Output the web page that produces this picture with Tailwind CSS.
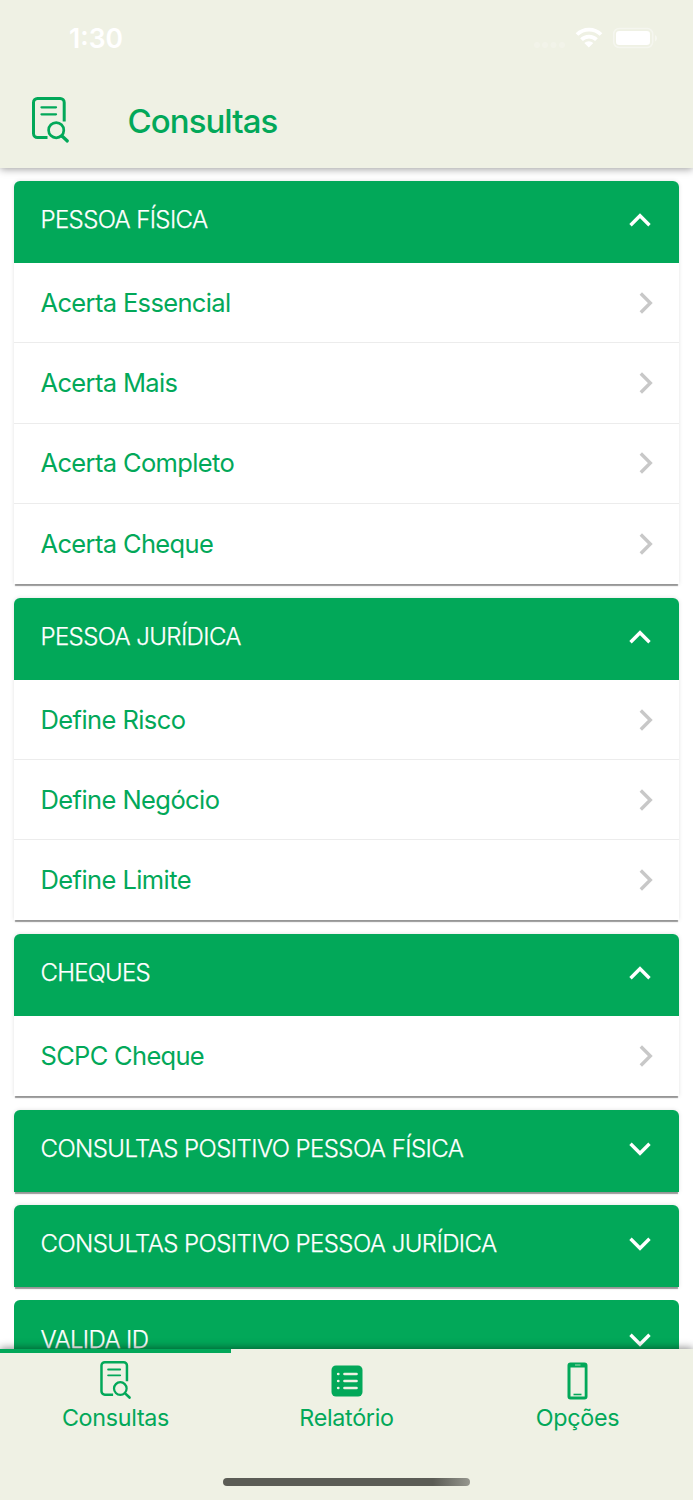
<!DOCTYPE html>
<html lang="pt-BR">
<head>
<meta charset="utf-8">
<title>Consultas</title>
<script src="https://cdn.jsdelivr.net/npm/@tailwindcss/browser@4"></script>
</head>
<body class="bg-white font-['Inter',sans-serif]">
<svg class="hidden">
  <symbol id="doc" viewBox="0 0 38 47"><g fill="none" stroke="currentColor" stroke-linecap="butt"><path d="M15.500 40.600H5.500a4 4 0 0 1-4-4V5.500a4 4 0 0 1 4-4H28.200a4 4 0 0 1 4 4V24.500" stroke-width="3"/><path d="M9.500 10.300H24M9.500 17.300H24" stroke-width="2.300" stroke-linecap="round"/><circle cx="24.200" cy="33.200" r="7.600" stroke-width="2.700"/><path d="M30 39l5.300 5" stroke-width="3.200" stroke-linecap="round"/></g></symbol>
  <symbol id="up" viewBox="0 0 22 14"><path d="M1.500 12.200L11 2.700l9.500 9.500" fill="none" stroke="currentColor" stroke-width="3.400"/></symbol>
  <symbol id="down" viewBox="0 0 22 14"><path d="M1.500 1.800L11 11.300l9.500-9.500" fill="none" stroke="currentColor" stroke-width="3.400"/></symbol>
  <symbol id="right" viewBox="0 0 14 22"><path d="M1.800 1.500L11.300 11l-9.500 9.500" fill="none" stroke="currentColor" stroke-width="3.400"/></symbol>
</svg>
<div class="flex h-[1500px] w-[693px] flex-col overflow-hidden text-[#02a859]">
  <header class="relative z-10 flex h-[168px] shrink-0 flex-col bg-[#eff1e4] shadow-[0_1px_8px_rgba(0,0,0,0.4)]">
    <div class="flex h-[76px] items-center justify-between pr-[36px] pl-[69px] text-white">
      <span class="text-[26.500px] leading-none font-semibold">1:30</span>
      <svg class="h-[24px] w-[124px]" viewBox="533 26 124 24" fill="#fff"><g opacity=".2"><circle cx="537" cy="45" r="3"/><circle cx="545" cy="45" r="3"/><circle cx="553.500" cy="45" r="3"/><circle cx="562" cy="45" r="3"/></g><g fill="none" stroke="#fff" stroke-width="3.800"><path d="M577 34.500a17 17 0 0 1 24 0"/><path d="M581.500 39.700a10.500 10.500 0 0 1 15 0"/></g><path d="M584.300 43a6.500 6.500 0 0 1 9 0l-4.500 4.600z"/><rect x="613.700" y="28.500" width="39" height="19" rx="5.500" fill="none" stroke="#fff" stroke-opacity=".4" stroke-width="1.500"/><rect x="616" y="31" width="34" height="14" rx="3.300"/><path d="M655 35v6.500q2-1 2-3.250t-2-3.250" opacity=".45"/></svg>
    </div>
    <div class="flex h-[91px] items-center pl-[32px]">
      <svg class="mb-[2px] h-[47px] w-[38px]"><use href="#doc"/></svg>
      <h1 class="ml-[57.500px] text-[33px] leading-none font-medium tracking-[-0.95px]">Consultas</h1>
    </div>
  </header>
  <main class="flex min-h-0 flex-1 flex-col gap-[13.400px] overflow-hidden pt-[13px] pr-[14px] pl-[13.500px]">
    <section class="shrink-0 rounded-t-[6px] bg-white shadow-[0_3px_1px_-1px_rgba(0,0,0,0.38),0_0_4px_rgba(0,0,0,0.12)]">
      <div class="flex h-[82px] items-center justify-between rounded-t-[6px] bg-[#02a859] pr-[28px] pb-[4px] pl-[27px] text-white"><h2 class="text-[24px] font-light tracking-[-0.63px] [-webkit-text-stroke:0.25px]">PESSOA FÍSICA</h2><svg class="h-[14px] w-[22px]"><use href="#up"/></svg></div>
      <div class="divide-y-[1.500px] divide-[#ececec] text-[25.500px] tracking-[-0.65px]">
        <div class="flex h-[80.300px] items-center justify-between pr-[26.500px] pl-[27px]"><span>Acerta Essencial</span><svg class="h-[22px] w-[14px] text-[#c8c8c8]"><use href="#right"/></svg></div>
        <div class="flex h-[80.300px] items-center justify-between pr-[26.500px] pl-[27px]"><span>Acerta Mais</span><svg class="h-[22px] w-[14px] text-[#c8c8c8]"><use href="#right"/></svg></div>
        <div class="flex h-[80.300px] items-center justify-between pr-[26.500px] pl-[27px]"><span>Acerta Completo</span><svg class="h-[22px] w-[14px] text-[#c8c8c8]"><use href="#right"/></svg></div>
        <div class="flex h-[80.300px] items-center justify-between pr-[26.500px] pl-[27px]"><span>Acerta Cheque</span><svg class="h-[22px] w-[14px] text-[#c8c8c8]"><use href="#right"/></svg></div>
      </div>
    </section>
    <section class="shrink-0 rounded-t-[6px] bg-white shadow-[0_3px_1px_-1px_rgba(0,0,0,0.38),0_0_4px_rgba(0,0,0,0.12)]">
      <div class="flex h-[82px] items-center justify-between rounded-t-[6px] bg-[#02a859] pr-[28px] pb-[3px] pl-[27px] text-white"><h2 class="text-[24px] font-light tracking-[-0.62px] [-webkit-text-stroke:0.25px]">PESSOA JURÍDICA</h2><svg class="h-[14px] w-[22px]"><use href="#up"/></svg></div>
      <div class="divide-y-[1.500px] divide-[#ececec] text-[25.500px] tracking-[-0.58px]">
        <div class="flex h-[80.300px] items-center justify-between pt-px pr-[26.500px] pl-[27px]"><span>Define Risco</span><svg class="h-[22px] w-[14px] text-[#c8c8c8]"><use href="#right"/></svg></div>
        <div class="flex h-[80.300px] items-center justify-between pt-px pr-[26.500px] pl-[27px]"><span>Define Negócio</span><svg class="h-[22px] w-[14px] text-[#c8c8c8]"><use href="#right"/></svg></div>
        <div class="flex h-[80.300px] items-center justify-between pr-[26.500px] pl-[27px]"><span>Define Limite</span><svg class="h-[22px] w-[14px] text-[#c8c8c8]"><use href="#right"/></svg></div>
      </div>
    </section>
    <section class="shrink-0 rounded-t-[6px] bg-white shadow-[0_3px_1px_-1px_rgba(0,0,0,0.38),0_0_4px_rgba(0,0,0,0.12)]">
      <div class="flex h-[82px] items-center justify-between rounded-t-[6px] bg-[#02a859] pr-[28px] pb-[3px] pl-[27px] text-white"><h2 class="text-[24px] font-light tracking-[-0.78px] [-webkit-text-stroke:0.25px]">CHEQUES</h2><svg class="h-[14px] w-[22px]"><use href="#up"/></svg></div>
      <div class="flex h-[80.300px] items-center justify-between pr-[26.500px] pl-[27px] text-[25.500px] tracking-[-0.7px]"><span>SCPC Cheque</span><svg class="h-[22px] w-[14px] text-[#c8c8c8]"><use href="#right"/></svg></div>
    </section>
    <section class="flex h-[82px] shrink-0 items-center justify-between rounded-t-[6px] bg-[#02a859] pr-[28px] pb-[3px] pl-[27px] text-white shadow-[0_3px_1px_-1px_rgba(0,0,0,0.38),0_0_4px_rgba(0,0,0,0.12)]"><h2 class="text-[24px] font-light tracking-[-0.57px] [-webkit-text-stroke:0.25px]">CONSULTAS POSITIVO PESSOA FÍSICA</h2><svg class="h-[14px] w-[22px]"><use href="#down"/></svg></section>
    <section class="flex h-[82px] shrink-0 items-center justify-between rounded-t-[6px] bg-[#02a859] pr-[28px] pb-[3px] pl-[27px] text-white shadow-[0_3px_1px_-1px_rgba(0,0,0,0.38),0_0_4px_rgba(0,0,0,0.12)]"><h2 class="text-[24px] font-light tracking-[-0.57px] [-webkit-text-stroke:0.25px]">CONSULTAS POSITIVO PESSOA JURÍDICA</h2><svg class="h-[14px] w-[22px]"><use href="#down"/></svg></section>
    <section class="flex h-[82px] shrink-0 items-center justify-between rounded-t-[6px] bg-[#02a859] pr-[28px] pb-[3px] pl-[27px] text-white"><h2 class="text-[24px] font-light tracking-[-0.63px] [-webkit-text-stroke:0.25px]">VALIDA ID</h2><svg class="h-[14px] w-[22px]"><use href="#down"/></svg></section>
  </main>
  <footer class="relative z-10 flex h-[151px] shrink-0 flex-col bg-[#eff1e4] shadow-[0_-1px_8px_rgba(0,0,0,0.45)]">
    <div class="h-[3.500px] w-[231px] bg-[#02a859]"></div>
    <nav class="grid grid-cols-3 text-[23.300px] leading-[30px] tracking-[-0.3px]">
      <div class="flex flex-col items-center"><div class="flex h-[50px] items-center pt-[6px]"><svg class="h-[39px] w-[32px]"><use href="#doc"/></svg></div><span>Consultas</span></div>
      <div class="flex flex-col items-center"><div class="flex h-[50px] items-center pt-[7px]"><svg class="h-[32px] w-[32px]" viewBox="0 0 32 32"><rect x=".5" y=".5" width="31" height="31" rx="4.500" fill="#02a859"/><g stroke="#eff1e4" stroke-width="2.700" stroke-linecap="round"><path d="M13.500 9h12M13.500 16h12M13.500 23h12M7.200 9h.1M7.200 16h.1M7.200 23h.1"/></g></svg></div><span>Relatório</span></div>
      <div class="flex flex-col items-center"><div class="flex h-[50px] items-center pt-[7px]"><svg class="h-[38px] w-[22px]" viewBox="0 0 22 38"><path fill="#02a859" fill-rule="evenodd" d="M3.500.5h14a3 3 0 0 1 3 3v31a3 3 0 0 1-3 3h-14a3 3 0 0 1-3-3v-31a3 3 0 0 1 3-3zM3.500 5.500v29h14.200v-29z"/><path d="M8 3h5.500" stroke="#8fd0a6" stroke-width="1.200"/><path d="M6.500 32.500h8" stroke="#02a859" stroke-width="1.600"/></svg></div><span>Opções</span></div>
    </nav>
    <div class="mt-auto mb-[14px] ml-[223px] h-[8px] w-[247px] rounded-full bg-linear-to-r from-[#5b5c55] from-85% to-[#96978f]"></div>
  </footer>
</div>
</body>
</html>
